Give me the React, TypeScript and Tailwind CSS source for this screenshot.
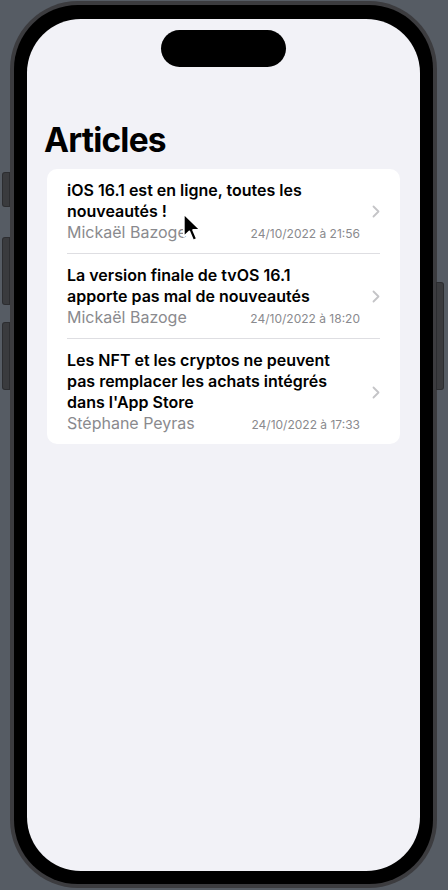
const articles = [
  {
    title: "iOS 16.1 est en ligne, toutes les nouveautés !",
    author: "Mickaël Bazoge",
    date: "24/10/2022 à 21:56",
  },
  {
    title: "La version finale de tvOS 16.1 apporte pas mal de nouveautés",
    author: "Mickaël Bazoge",
    date: "24/10/2022 à 18:20",
  },
  {
    title: "Les NFT et les cryptos ne peuvent pas remplacer les achats intégrés dans l'App Store",
    author: "Stéphane Peyras",
    date: "24/10/2022 à 17:33",
  },
];

function Chevron() {
  return (
    <svg width="8" height="13" viewBox="0 0 8 13" fill="none" className="shrink-0">
      <path d="M1.5 1.5 L6.5 6.5 L1.5 11.5" stroke="#c4c4c7" strokeWidth="1.8" strokeLinecap="round" strokeLinejoin="round" />
    </svg>
  );
}

function Cursor() {
  return (
    <svg width="22" height="32" viewBox="0 0 18 26" className="pointer-events-none absolute left-[155px] top-[193px]">
      <path
        d="M1.5 1.5 L1.5 20 L6 15.8 L9.2 23.2 L12.2 21.9 L9 14.6 L15 14.6 Z"
        fill="#000"
        stroke="#fff"
        strokeWidth="1.4"
        strokeLinejoin="round"
      />
    </svg>
  );
}

export default function App() {
  return (
    <div className="relative h-[890px] w-[448px] overflow-hidden bg-[#565c64] pl-[10px] pt-[1px] font-['Inter',_sans-serif]">
      {/* side buttons */}
      <div className="absolute left-[3px] top-[173px] h-[33px] w-[6px] rounded-l-[2px] bg-[#3a3b3e] ring-1 ring-[#2c2d30]" />
      <div className="absolute left-[3px] top-[238px] h-[66px] w-[6px] rounded-l-[2px] bg-[#3a3b3e] ring-1 ring-[#2c2d30]" />
      <div className="absolute left-[3px] top-[323px] h-[66px] w-[6px] rounded-l-[2px] bg-[#3a3b3e] ring-1 ring-[#2c2d30]" />
      <div className="absolute left-[437px] top-[283px] h-[106px] w-[6px] rounded-r-[2px] bg-[#3a3b3e] ring-1 ring-[#2c2d30]" />

      <div className="h-[887px] w-[427px] rounded-[68px] bg-[#3c3c3f] p-[4px]">
        <div className="h-full w-full rounded-[64px] bg-black px-[13px] pb-[13px] pt-[14px]">
          <div className="relative h-[852px] w-[393px] overflow-hidden rounded-[54px] bg-[#f2f2f7]">
            <div className="absolute left-[134px] top-[11px] h-[37px] w-[125px] rounded-full bg-black" />

            <div className="pt-[101px]">
              <h1 className="px-[17px] text-[33.5px] font-bold leading-[41px] tracking-[-0.8px] text-black">Articles</h1>

              <div className="mx-[20px] mt-[8px] overflow-hidden rounded-[10px] bg-white">
                {articles.map((article, i) => (
                  <div key={article.date} className="pl-[20px] pr-[20px]">
                    <div
                      className={`flex items-center gap-[12px] pb-[10px] pt-[11px] ${
                        i > 0 ? "border-t border-[#dedee2]" : ""
                      }`}
                    >
                      <div className="min-w-0 flex-1">
                        <p className="pr-[10px] text-[16px] font-semibold leading-[21px] text-black">{article.title}</p>
                        <div className="flex h-[21px] items-center justify-between">
                          <span className="text-[16px] leading-[21px] text-[#8a8a8e]">{article.author}</span>
                          <span className="pt-[1px] text-[12px] leading-[21px] text-[#8a8a8e]">{article.date}</span>
                        </div>
                      </div>
                      <Chevron />
                    </div>
                  </div>
                ))}
              </div>
            </div>

            <Cursor />
          </div>
        </div>
      </div>
    </div>
  );
}
